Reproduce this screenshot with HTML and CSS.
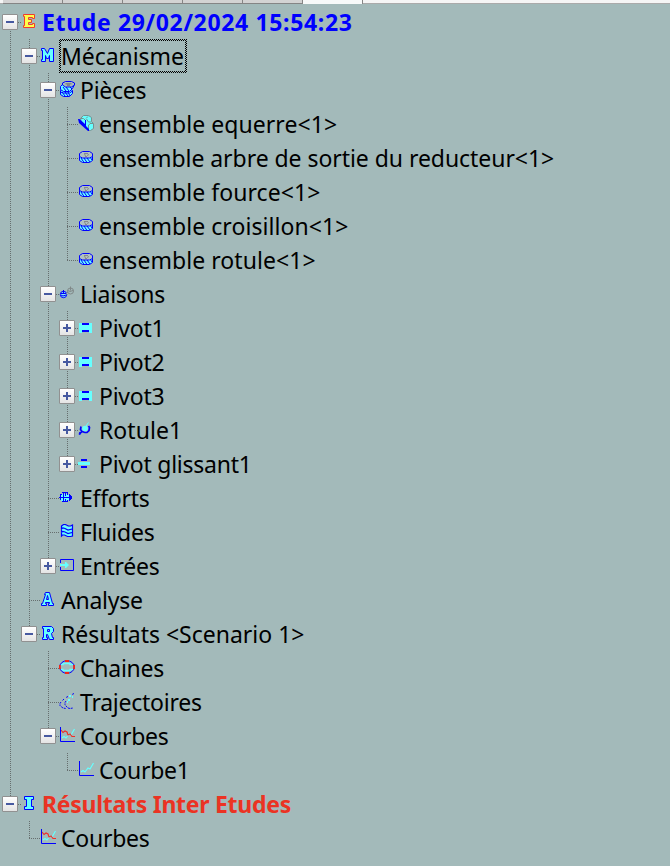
FILE: index.html
```html
<!DOCTYPE html>
<html lang="fr">
<head>
<meta charset="utf-8">
<title>Etude</title>
<link rel="stylesheet" href="styles.css">
</head>
<body>
<svg class="defs" aria-hidden="true">
  <symbol id="e" viewBox="0 0 16 16"><path d="M2.500 1.500h11v4h-2v-1h-4v2h3v3h-3v2h4v-1h2v4h-11v-2h1v-9h-1z" fill="#ffff4a" stroke="#f03a2e"/></symbol>
  <symbol id="m" viewBox="0 0 16 16"><path d="M1.500 1.500h3l3 5 2-5h4v13h-4v-6l-1 3h-2l-1-3v6h-4v-2h1v-9h-1z" fill="#6ff" stroke="#00f"/></symbol>
  <symbol id="a" viewBox="0 0 16 16"><path d="M5.500 1.500h4l3 11h1v2h-5v-2h1v-1h-4v1h1v2h-5v-2h1l3-9h-1z" fill="#6ff" stroke="#00f"/><path d="M6.500 8.500h2l-1-4z" fill="#a4baba" stroke="#00f"/></symbol>
  <symbol id="r" viewBox="0 0 16 16"><path d="M2.500 1.500h9l2 2v3l-2 2 1 4h1v2h-4l-2-5h-1v3h1v2h-5v-2h1v-9h-1z" fill="#6ff" stroke="#00f"/><path d="M7.500 4.500h2v2h-2z" fill="#a4baba" stroke="#00f"/></symbol>
  <symbol id="i" viewBox="0 0 16 16"><path d="M3.500 1.500h9v3h-2v7h2v3h-9v-3h2v-7h-2z" fill="#6ff" stroke="#00f"/></symbol>
  <symbol id="part" viewBox="0 0 16 16"><path d="M1.500 6.500v5l3 2h7l3-2v-5z" fill="#6ff" stroke="#00f"/><path d="M3 9l3 4.500M6 9l3 4.500M9 9l3 4M12 8l2 3" stroke="#00f"/><path d="M4.500 2.500h7l3 2v3l-3 1.500h-7l-3-1.500v-3z" fill="#b0c2c2" stroke="#00f"/><path d="M6 4.500h4M7 7.500h2M6.500 5l1 2M10.500 5l-1 2" stroke="#888" fill="none"/></symbol>
  <symbol id="parts" viewBox="0 0 16 16"><path d="M1.500 9.500l3-2h6l3 2v3l-3 3h-6l-3-2z" fill="#6ff" stroke="#00f"/><path d="M3 11l3 4M6 11l3 4M9 11l2 4M1.500 11l3 1h6l3-2" stroke="#00f" fill="none"/><path d="M3.500 3.500l-2 2v3l3 2h6l3-3 2-4z" fill="#6ff" stroke="#00f"/><path d="M4 6l3 4M7 6l3 4M11 6l2 2" stroke="#00f"/><path d="M6.500.500h6l3 1.500v2l-3 2h-6l-3-2V2z" fill="#a9bcbc" stroke="#00f"/><path d="M6.500 2h6v1.500h-1.500V5H8V3.500H6.500z" fill="#808888"/></symbol>
  <symbol id="angle" viewBox="0 0 16 16"><path d="M2.500 3.500l3-3h5l3 2v4l2 2v5l-3 2h-2l-7-7z" fill="#6ff" stroke="#789090"/><path d="M2.500 3.500h3l2 2M8 3.500l2-2M10.500 10.500l1.500-2h3M10.500 10v5M8.500 4l2 3h3" stroke="#789090" fill="none"/><path d="M0 4h1.500L7 9V5h1v6l3 3v2h-1L1 8z" fill="#00f"/></symbol>
  <symbol id="links" viewBox="0 0 16 16"><circle cx="4.500" cy="9.500" r="3.200" fill="#8ee" stroke="#00f"/><path d="M4.500 5v4M2 8.500h5M2 10l2 1 3-1" stroke="#00f" fill="none"/><circle cx="11.500" cy="6" r="3" fill="none" stroke="#808888"/><path d="M9 5.500l2 1 3-1M11.500 1.500v4M7 9l2-2" fill="none" stroke="#808888"/></symbol>
  <symbol id="pivot" viewBox="0 0 16 16"><path d="M1 4h3v2h7V4h3v10h-3v-3H4v3H1z" fill="#6ff"/><path d="M4 4h7v2H4zM4 11h7v2H4z" fill="#00f"/></symbol>
  <symbol id="slide" viewBox="0 0 16 16"><path d="M0 7h12v3H0z" fill="#6ff"/><path d="M3 4h6v2H3zM3 11h6v2H3z" fill="#00f"/></symbol>
  <symbol id="ball" viewBox="0 0 16 16"><path d="M3 5.500l-.500 3 1.500 2 3 1h2l2-2 .500-3-1-1.500M1 13.500l3-3M2 11v2.500" fill="none" stroke="#00f" stroke-width="1.700"/><circle cx="7" cy="7.500" r="2.800" fill="#6ff"/><path d="M8 5l2.500-3.500" stroke="#6ff"/></symbol>
  <symbol id="force" viewBox="0 0 16 16"><path d="M1 5h7v1h3v5H8v1H2v-2H1z" fill="#6ff"/><path d="M3 3.500h6M1 5.500h2M0 8.500h3M3 12.500h6M4.500 4v8M6.500 4v3M6.500 10v3M8.500 4v2M8.500 11v2M2 8.500h11M10.500 5v7M1.500 6v5M11.500 6v5M12.500 7v3" fill="none" stroke="#00f"/></symbol>
  <symbol id="fluid" viewBox="0 0 16 16"><path d="M2 3l3-1 4 2 4-1v10l-4 1-4-2-3 1z" fill="#6ff"/><path d="M2.500 3l2-1.500h2l3 1.500h2l2-1V13l-2 .500h-3l-3-1.500h-2l-1 1zM2 6l2-1 2 .500 3 1.500 4-1M2 9.500l2-1 2 .500 3 1.500 4-1M2.500 3v3M2.500 8.500v4" fill="none" stroke="#00f" stroke-width="1.200"/></symbol>
  <symbol id="input" viewBox="0 0 16 16"><path d="M1.500 6V2.500h13v11h-13V10" fill="none" stroke="#00f"/><path d="M1 7h5V5h1l3 3-3 3H6V9H1z" fill="#6ff"/></symbol>
  <symbol id="chain" viewBox="0 0 16 16"><path d="M2 5.500h2v-1h7v1h3M2 10.500h2v1h7v-1h3" stroke="#6ff" fill="none" stroke-width="1.300"/><ellipse cx="8" cy="8" rx="7.300" ry="6.300" fill="none" stroke="#00f"/><path d="M6 2h4M6 14h4M.900 6v4M15.100 6v4" stroke="#f02818" stroke-width="1.800"/></symbol>
  <symbol id="traj" viewBox="0 0 16 16"><path d="M9 3.500l-2 1M5 6L3 8M2 9l-1 1.500v2l1 1L4 15l3 .500M15 .500l-2 1M7 8L6 9.500v2L7 13l2 2 2 .500 3-.500" fill="none" stroke="#00f" stroke-dasharray="2 .8"/><path d="M9 7h2M8 9h1M10 3h2M13 4h1" fill="none" stroke="#6ff" stroke-width="2"/></symbol>
  <symbol id="curves" viewBox="0 0 16 16"><path d="M3 11l2-1.500 2 1.500 3-4 2 1 3.500-6" fill="none" stroke="#6ff" stroke-width="1.200"/><path d="M2 3l2 2.500L6 4l2 1 1 3 2-1 2 2.500h3" fill="none" stroke="#f03028" stroke-width="1.200"/><path d="M1.500 0v14.500H16" fill="none" stroke="#00f"/></symbol>
  <symbol id="curve" viewBox="0 0 16 16"><path d="M3 11l2-1.500 2 1.500 3-4 2 1 3.500-6" fill="none" stroke="#6ff" stroke-width="1.200"/><path d="M1.500 0v14.500H16" fill="none" stroke="#00f"/></symbol>
</svg>
<div class="tabs"><b></b><b></b><b></b><b></b><b></b><b class="active"></b></div>
<main class="tree">
<div class="row"><i class="start h"><u></u></i><svg><use href="#e"/></svg><span class="study">Etude 29/02/2024 15:54:23</span></div>
<div class="row"><i class="v"></i><i class="v h"><u></u></i><svg><use href="#m"/></svg><span class="focus">Mécanisme</span></div>
<div class="row"><i class="v"></i><i class="v"></i><i class="v h"><u></u></i><svg><use href="#parts"/></svg><span>Pièces</span></div>
<div class="row"><i class="v"></i><i class="v"></i><i class="v"></i><i class="v h"></i><svg><use href="#angle"/></svg><span class="part">ensemble equerre&lt;1&gt;</span></div>
<div class="row"><i class="v"></i><i class="v"></i><i class="v"></i><i class="v h"></i><svg><use href="#part"/></svg><span class="part long">ensemble arbre de sortie du reducteur&lt;1&gt;</span></div>
<div class="row"><i class="v"></i><i class="v"></i><i class="v"></i><i class="v h"></i><svg><use href="#part"/></svg><span class="part">ensemble fource&lt;1&gt;</span></div>
<div class="row"><i class="v"></i><i class="v"></i><i class="v"></i><i class="v h"></i><svg><use href="#part"/></svg><span class="part">ensemble croisillon&lt;1&gt;</span></div>
<div class="row"><i class="v"></i><i class="v"></i><i class="v"></i><i class="end h"></i><svg><use href="#part"/></svg><span class="part">ensemble rotule&lt;1&gt;</span></div>
<div class="row"><i class="v"></i><i class="v"></i><i class="v h"><u></u></i><svg><use href="#links"/></svg><span>Liaisons</span></div>
<div class="row"><i class="v"></i><i class="v"></i><i class="v"></i><i class="v h"><u class="plus"></u></i><svg><use href="#pivot"/></svg><span>Pivot1</span></div>
<div class="row"><i class="v"></i><i class="v"></i><i class="v"></i><i class="v h"><u class="plus"></u></i><svg><use href="#pivot"/></svg><span>Pivot2</span></div>
<div class="row"><i class="v"></i><i class="v"></i><i class="v"></i><i class="v h"><u class="plus"></u></i><svg><use href="#pivot"/></svg><span>Pivot3</span></div>
<div class="row"><i class="v"></i><i class="v"></i><i class="v"></i><i class="v h"><u class="plus"></u></i><svg><use href="#ball"/></svg><span class="part">Rotule1</span></div>
<div class="row"><i class="v"></i><i class="v"></i><i class="v"></i><i class="end h"><u class="plus"></u></i><svg><use href="#slide"/></svg><span>Pivot glissant1</span></div>
<div class="row"><i class="v"></i><i class="v"></i><i class="v h"></i><svg><use href="#force"/></svg><span>Efforts</span></div>
<div class="row"><i class="v"></i><i class="v"></i><i class="v h"></i><svg><use href="#fluid"/></svg><span>Fluides</span></div>
<div class="row"><i class="v"></i><i class="v"></i><i class="end h"><u class="plus"></u></i><svg><use href="#input"/></svg><span>Entrées</span></div>
<div class="row"><i class="v"></i><i class="v h"></i><svg><use href="#a"/></svg><span>Analyse</span></div>
<div class="row"><i class="v"></i><i class="end h"><u></u></i><svg><use href="#r"/></svg><span class="scenario">Résultats &lt;Scenario 1&gt;</span></div>
<div class="row"><i class="v"></i><i></i><i class="v h"></i><svg><use href="#chain"/></svg><span>Chaines</span></div>
<div class="row"><i class="v"></i><i></i><i class="v h"></i><svg><use href="#traj"/></svg><span>Trajectoires</span></div>
<div class="row"><i class="v"></i><i></i><i class="end h"><u></u></i><svg><use href="#curves"/></svg><span>Courbes</span></div>
<div class="row"><i class="v"></i><i></i><i></i><i class="end h"></i><svg><use href="#curve"/></svg><span>Courbe1</span></div>
<div class="row"><i class="end h"><u></u></i><svg><use href="#i"/></svg><span class="inter">Résultats Inter Etudes</span></div>
<div class="row"><i></i><i class="end h"></i><svg><use href="#curves"/></svg><span>Courbes</span></div>
</main>
</body>
</html>
```
FILE: styles.css
```css
* { box-sizing: border-box; }
body {
  margin: 0;
  height: 866px;
  overflow: hidden;
  background: #a3baba;
  color: #000;
  font-family: "Noto Sans", "Open Sans", sans-serif;
  font-size: 23px;
}
.defs { position: absolute; width: 0; height: 0; }
.tabs {
  display: flex;
  height: 4px;
  padding-left: 3px;
  background: linear-gradient(#f5f5f5 3px, #aaa 3px);
}
.tabs b {
  width: 60px;
  height: 4px;
  border-right: 1px solid #858585;
  background: linear-gradient(#d3d3d3 3px, #858585 3px);
}
.tabs .active { background: #f7f9f9; }
.tree { padding-top: 1px; }
.row { display: flex; height: 34px; }
.row > i {
  position: relative;
  flex: none;
  width: 19px;
  background: repeating-linear-gradient(#666e6e 0 1px, transparent 1px 2px) no-repeat 10px 0 / 0 0;
}
.row > .v { background-size: 1px 34px; }
.row > .end { background-size: 1px 18px; }
.row > .start { background-position: 10px 18px; background-size: 1px 16px; }
.h::before {
  content: "";
  position: absolute;
  left: 10px;
  top: 17px;
  width: 11px;
  height: 1px;
  background: repeating-linear-gradient(90deg, #666e6e 0 1px, transparent 1px 2px);
}
.row u {
  position: absolute;
  left: 2px;
  top: 9px;
  width: 16px;
  height: 16px;
  border: 1px solid #919191;
  border-radius: 1px;
  background:
    linear-gradient(#4659a0, #4659a0) no-repeat 3px 6px / 8px 2px,
    linear-gradient(#fff, #e4e4e4);
}
.row .plus {
  background:
    linear-gradient(#4659a0, #4659a0) no-repeat 3px 6px / 8px 2px,
    linear-gradient(#4659a0, #4659a0) no-repeat 6px 3px / 2px 8px,
    linear-gradient(#fff, #e4e4e4);
}
.row svg {
  flex: none;
  width: 16px;
  height: 16px;
  margin: 8px 0 0 2px;
  fill: none;
}
.row span {
  height: 34px;
  margin-left: 3px;
  padding: 0 2px;
  line-height: 35px;
  letter-spacing: -.25px;
  white-space: nowrap;
}
.row .focus {
  padding-right: 1px;
  letter-spacing: -.05px;
  border: 2px solid transparent;
  padding-left: 0;
  line-height: 31px;
  background:
    linear-gradient(#a3baba, #a3baba) padding-box,
    repeating-conic-gradient(#000 0 25%, #a3baba 0 50%) 0 0 / 2px 2px border-box;
}
.row .part { letter-spacing: .06px; }
.row .long { letter-spacing: -.05px; }
.row .scenario { letter-spacing: 0; }
.row .study, .row .inter { font-weight: 700; }
.row .study { color: #00f; letter-spacing: .65px; }
.row .inter { color: #eb3323; letter-spacing: -.27px; }
```
